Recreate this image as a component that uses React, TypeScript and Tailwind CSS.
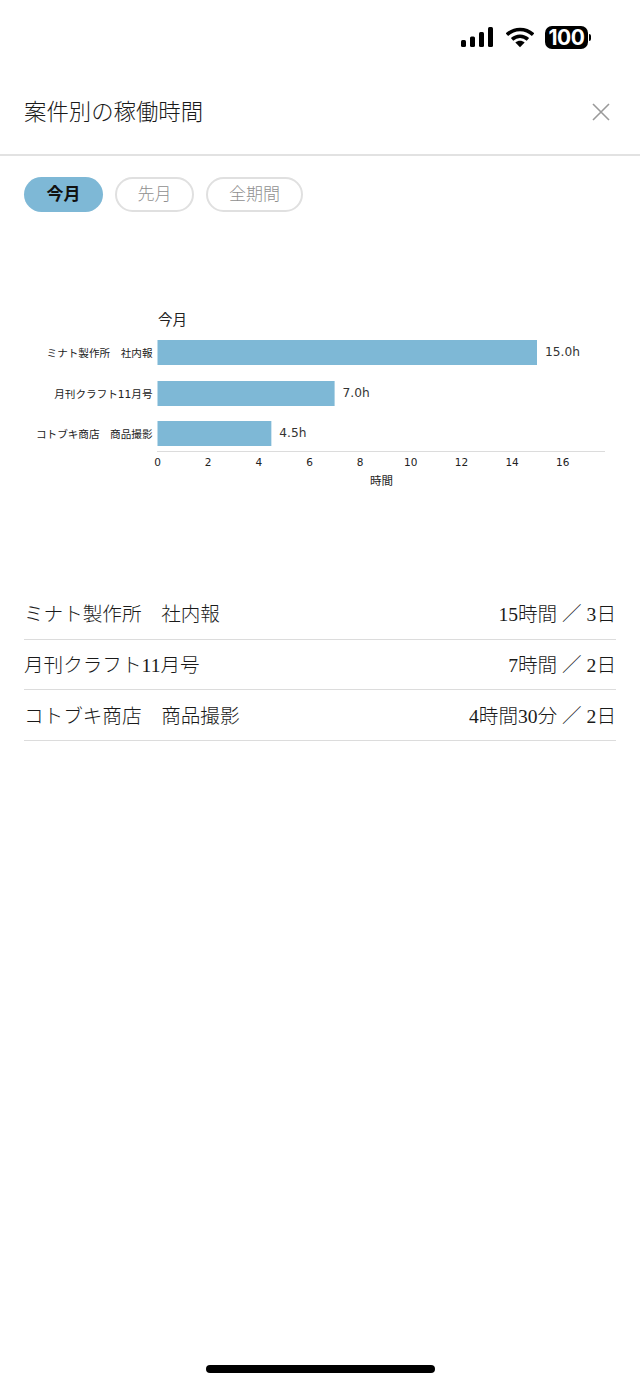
import React from "react";

const sans = '"DejaVu Sans", "Noto Sans CJK JP", sans-serif';

const bars = [
    { label: "ミナト製作所　社内報", hours: 15, y: 40 },
    { label: "月刊クラフト11月号", hours: 7, y: 81 },
    { label: "コトブキ商店　商品撮影", hours: 4.5, y: 121 },
];

const rows = [
    { name: "ミナト製作所　社内報", value: "15時間 ／ 3日" },
    { name: "月刊クラフト11月号", value: "7時間 ／ 2日" },
    { name: "コトブキ商店　商品撮影", value: "4時間30分 ／ 2日" },
];

function StatusBar() {
    return (
        <div className="h-[75px] flex justify-end items-start pt-[26px] pr-[49px]">
            <svg width="32" height="22" viewBox="1 0 32 22" className="mr-[13px]">
                <rect x="1" y="14" width="5" height="7" rx="1.5" fill="#000" />
                <rect x="10" y="10.5" width="5" height="10.5" rx="1.5" fill="#000" />
                <rect x="19" y="6" width="5" height="15" rx="1.5" fill="#000" />
                <rect x="28" y="1" width="5" height="20" rx="1.5" fill="#000" />
            </svg>
            <svg width="28" height="22" viewBox="0 0 30 22" className="mr-[11px]">
                <path d="M1 8.5 C9 1 21 1 29 8.5" fill="none" stroke="#000" strokeWidth="3.8" />
                <path d="M6.5 13.5 C11.5 9 18.5 9 23.5 13.5" fill="none" stroke="#000" strokeWidth="3.8" />
                <path d="M15 22 L10 17 C13 14.5 17 14.5 20 17 Z" fill="#000" />
            </svg>
            <div className="flex items-center h-[23px]">
                <div className="w-[43px] h-[23px] rounded-[7px] bg-black text-white flex items-center justify-center text-[21px] font-bold leading-none tracking-[-0.5px] font-['Inter',sans-serif]">
                    100
                </div>
                <div className="w-[2px] h-[7px] ml-[1px] rounded-r-[2px] bg-black" />
            </div>
        </div>
    );
}

function Chart() {
    return (
        <svg width="640" height="200" viewBox="0 0 640 200" fontFamily={sans} className="block">
            <text x="158" y="25" fontSize="14.5" fill="#222">今月</text>
            {bars.map((b) => (
                <g key={b.label}>
                    <text x="152.5" y={b.y + 16.5} fontSize="10.6" textAnchor="end" fill="#222">{b.label}</text>
                    <rect x="157.5" y={b.y} width={b.hours * 25.3} height="25" fill="#7eb8d6" />
                    <text x={157.5 + b.hours * 25.3 + 8} y={b.y + 16} fontSize="12.2" fill="#333">{b.hours.toFixed(1)}h</text>
                </g>
            ))}
            <line x1="157" y1="151.5" x2="605" y2="151.5" stroke="#dcdcdc" />
            {[0, 2, 4, 6, 8, 10, 12, 14, 16].map((t) => (
                <text key={t} x={157.5 + t * 25.33} y="166" fontSize="10.5" textAnchor="middle" fill="#222">{t}</text>
            ))}
            <text x="381.5" y="184.5" fontSize="11.5" textAnchor="middle" fill="#222">時間</text>
        </svg>
    );
}

export default function App() {
    return (
        <main className="w-[640px] h-[1385px] bg-white flex flex-col font-['Liberation_Serif','Noto_Sans_CJK_JP',serif] text-[#1a1a1a]">
            <StatusBar />
            <header className="h-[81px] flex items-center justify-between pl-[24px] pr-[29.5px] pb-[3px] border-b-2 border-[#e2e2e2]">
                <h1 className="text-[22.4px] font-light leading-none">案件別の稼働時間</h1>
                <svg width="20" height="20" viewBox="0 0 20 20" className="mb-[3px]">
                    <path d="M2 2 L18 18 M18 2 L2 18" stroke="#9a9a9a" strokeWidth="1.6" />
                </svg>
            </header>
            <div className="flex gap-[12px] pl-[24px] pt-[21px]">
                <button className="w-[79px] h-[35px] rounded-full bg-[#7eb8d6] text-[#111] text-[17px] font-bold">今月</button>
                <button className="w-[79px] h-[35px] rounded-full border-2 border-[#e0e0e0] text-[#8f8f8f] text-[17px] font-light">先月</button>
                <button className="w-[97px] h-[35px] rounded-full border-2 border-[#e0e0e0] text-[#8f8f8f] text-[17px] font-light">全期間</button>
            </div>
            <div className="mt-[88px]">
                <Chart />
            </div>
            <ul className="mt-[89px] mx-[24px]">
                {rows.map((r) => (
                    <li key={r.name} className="h-[50.7px] flex items-center justify-between pt-[2px] border-b border-[#dcdcdc] text-[19.6px] font-light">
                        <span>{r.name}</span>
                        <span>{r.value}</span>
                    </li>
                ))}
            </ul>
            <div className="mt-auto mb-[12px] mx-auto w-[229px] h-[8px] rounded-full bg-black" />
        </main>
    );
}
